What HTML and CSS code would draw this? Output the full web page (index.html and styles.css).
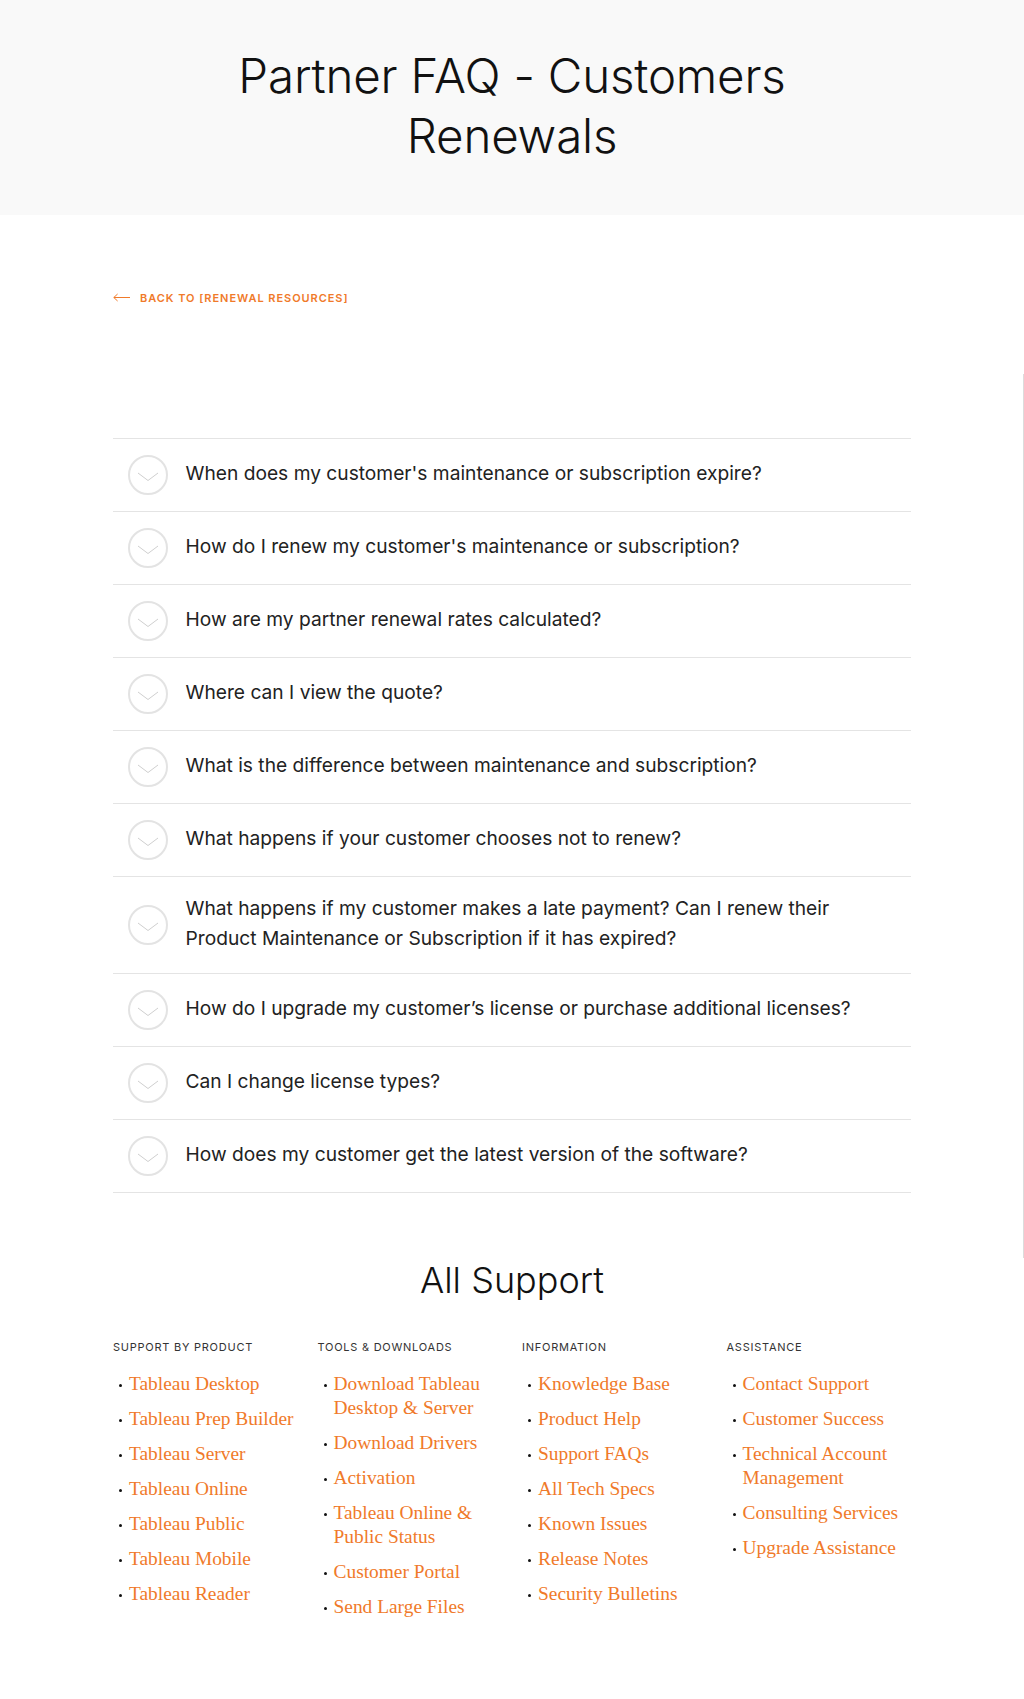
FILE: index.html
```html
<!DOCTYPE html>
<html lang="en">
<head>
<meta charset="utf-8">
<title>Partner FAQ - Customers Renewals</title>
<link rel="stylesheet" href="styles.css">
</head>
<body>
<header class="hero">
  <h1 class="hero-title">Partner FAQ - Customers Renewals</h1>
</header>

<div class="back-wrap">
  <a class="back-link" href="#">
    <svg class="back-arrow" width="17" height="9" viewBox="0 0 17 9" aria-hidden="true">
      <path d="M0.8 4.5 H17 M0.8 4.5 L4.6 1 M0.8 4.5 L4.6 8" fill="none" stroke="#f07a2a" stroke-width="1"/>
    </svg>
    <span>Back to [Renewal Resources]</span>
  </a>
</div>

<section class="faq-section">
  <ul class="faq-list">
    <li class="faq-item"><span class="faq-icon"><svg viewBox="0 0 40 40" width="40" height="40"><circle cx="20" cy="20" r="19" fill="none" stroke="#e3e3e3" stroke-width="2"/><polyline points="10,18 20,25.5 30,18" fill="none" stroke="#cfcfcf" stroke-width="1"/></svg></span><span class="faq-q">When does my customer's maintenance or subscription expire?</span></li>
    <li class="faq-item"><span class="faq-icon"><svg viewBox="0 0 40 40" width="40" height="40"><circle cx="20" cy="20" r="19" fill="none" stroke="#e3e3e3" stroke-width="2"/><polyline points="10,18 20,25.5 30,18" fill="none" stroke="#cfcfcf" stroke-width="1"/></svg></span><span class="faq-q">How do I renew my customer's maintenance or subscription?</span></li>
    <li class="faq-item"><span class="faq-icon"><svg viewBox="0 0 40 40" width="40" height="40"><circle cx="20" cy="20" r="19" fill="none" stroke="#e3e3e3" stroke-width="2"/><polyline points="10,18 20,25.5 30,18" fill="none" stroke="#cfcfcf" stroke-width="1"/></svg></span><span class="faq-q">How are my partner renewal rates calculated?</span></li>
    <li class="faq-item"><span class="faq-icon"><svg viewBox="0 0 40 40" width="40" height="40"><circle cx="20" cy="20" r="19" fill="none" stroke="#e3e3e3" stroke-width="2"/><polyline points="10,18 20,25.5 30,18" fill="none" stroke="#cfcfcf" stroke-width="1"/></svg></span><span class="faq-q">Where can I view the quote?</span></li>
    <li class="faq-item"><span class="faq-icon"><svg viewBox="0 0 40 40" width="40" height="40"><circle cx="20" cy="20" r="19" fill="none" stroke="#e3e3e3" stroke-width="2"/><polyline points="10,18 20,25.5 30,18" fill="none" stroke="#cfcfcf" stroke-width="1"/></svg></span><span class="faq-q">What is the difference between maintenance and subscription?</span></li>
    <li class="faq-item"><span class="faq-icon"><svg viewBox="0 0 40 40" width="40" height="40"><circle cx="20" cy="20" r="19" fill="none" stroke="#e3e3e3" stroke-width="2"/><polyline points="10,18 20,25.5 30,18" fill="none" stroke="#cfcfcf" stroke-width="1"/></svg></span><span class="faq-q">What happens if your customer chooses not to renew?</span></li>
    <li class="faq-item"><span class="faq-icon"><svg viewBox="0 0 40 40" width="40" height="40"><circle cx="20" cy="20" r="19" fill="none" stroke="#e3e3e3" stroke-width="2"/><polyline points="10,18 20,25.5 30,18" fill="none" stroke="#cfcfcf" stroke-width="1"/></svg></span><span class="faq-q">What happens if my customer makes a late payment? Can I renew their Product Maintenance or Subscription if it has expired?</span></li>
    <li class="faq-item"><span class="faq-icon"><svg viewBox="0 0 40 40" width="40" height="40"><circle cx="20" cy="20" r="19" fill="none" stroke="#e3e3e3" stroke-width="2"/><polyline points="10,18 20,25.5 30,18" fill="none" stroke="#cfcfcf" stroke-width="1"/></svg></span><span class="faq-q">How do I upgrade my customer’s license or purchase additional licenses?</span></li>
    <li class="faq-item"><span class="faq-icon"><svg viewBox="0 0 40 40" width="40" height="40"><circle cx="20" cy="20" r="19" fill="none" stroke="#e3e3e3" stroke-width="2"/><polyline points="10,18 20,25.5 30,18" fill="none" stroke="#cfcfcf" stroke-width="1"/></svg></span><span class="faq-q">Can I change license types?</span></li>
    <li class="faq-item"><span class="faq-icon"><svg viewBox="0 0 40 40" width="40" height="40"><circle cx="20" cy="20" r="19" fill="none" stroke="#e3e3e3" stroke-width="2"/><polyline points="10,18 20,25.5 30,18" fill="none" stroke="#cfcfcf" stroke-width="1"/></svg></span><span class="faq-q">How does my customer get the latest version of the software?</span></li>
  </ul>
</section>

<section class="support">
  <h2 class="support-title">All Support</h2>
  <div class="support-grid">
    <div class="support-col">
      <h3 class="col-title">Support by Product</h3>
      <ul class="link-list">
        <li><a href="#">Tableau Desktop</a></li>
        <li><a href="#">Tableau Prep Builder</a></li>
        <li><a href="#">Tableau Server</a></li>
        <li><a href="#">Tableau Online</a></li>
        <li><a href="#">Tableau Public</a></li>
        <li><a href="#">Tableau Mobile</a></li>
        <li><a href="#">Tableau Reader</a></li>
      </ul>
    </div>
    <div class="support-col">
      <h3 class="col-title">Tools &amp; Downloads</h3>
      <ul class="link-list">
        <li><a href="#">Download Tableau Desktop &amp; Server</a></li>
        <li><a href="#">Download Drivers</a></li>
        <li><a href="#">Activation</a></li>
        <li><a href="#">Tableau Online &amp; Public Status</a></li>
        <li><a href="#">Customer Portal</a></li>
        <li><a href="#">Send Large Files</a></li>
      </ul>
    </div>
    <div class="support-col">
      <h3 class="col-title">Information</h3>
      <ul class="link-list">
        <li><a href="#">Knowledge Base</a></li>
        <li><a href="#">Product Help</a></li>
        <li><a href="#">Support FAQs</a></li>
        <li><a href="#">All Tech Specs</a></li>
        <li><a href="#">Known Issues</a></li>
        <li><a href="#">Release Notes</a></li>
        <li><a href="#">Security Bulletins</a></li>
      </ul>
    </div>
    <div class="support-col">
      <h3 class="col-title">Assistance</h3>
      <ul class="link-list">
        <li><a href="#">Contact Support</a></li>
        <li><a href="#">Customer Success</a></li>
        <li><a href="#">Technical Account Management</a></li>
        <li><a href="#">Consulting Services</a></li>
        <li><a href="#">Upgrade Assistance</a></li>
      </ul>
    </div>
  </div>
</section>
</body>
</html>
```

FILE: styles.css
```css
* { box-sizing: border-box; }

html, body {
  margin: 0;
  padding: 0;
  background: #ffffff;
}

body {
  font-family: Inter, "Noto Sans", Arial, sans-serif;
  color: #222;
  min-height: 1699px;
}

.hero {
  background: #f9f9f9;
  padding: 46px 0 49px;
}

.hero-title {
  margin: 0 auto;
  max-width: 620px;
  text-align: center;
  font-family: Inter, Arial, sans-serif;
  font-weight: 300;
  font-size: 47.5px;
  line-height: 60px;
  color: #111;
  letter-spacing: -0.2px;
}

.back-wrap {
  padding: 71px 0 0 113px;
  height: 159px;
}

.back-link {
  display: inline-flex;
  align-items: center;
  gap: 10px;
  text-decoration: none;
  color: #f07a2a;
  font-family: Inter, Arial, sans-serif;
  font-size: 11px;
  line-height: 16px;
  font-weight: 600;
  letter-spacing: 0.95px;
  text-transform: uppercase;
}

.back-arrow { display: block; }

.faq-section {
  border-right: 1px solid #dcdcdc;
  padding: 64px 0 65px;
}

.faq-list {
  list-style: none;
  margin: 0 auto;
  padding: 0;
  width: 798px;
  border-bottom: 1px solid #e4e4e4;
}

.faq-item {
  display: flex;
  align-items: center;
  gap: 18px;
  border-top: 1px solid #e4e4e4;
  padding: 16px 0 16px 15px;
}

.faq-icon {
  flex: 0 0 40px;
  width: 40px;
  height: 40px;
}

.faq-icon svg { display: block; }

.faq-q {
  font-size: 19.2px;
  line-height: 30px;
  padding: 0 24px 4px 0;
  color: #222;
  font-weight: 400;
}

.support {
  padding: 0 0 60px;
}

.support-title {
  margin: 0 0 37px;
  text-align: center;
  font-family: Inter, Arial, sans-serif;
  font-weight: 300;
  font-size: 36px;
  line-height: 44px;
  color: #111;
}

.support-grid {
  width: 798px;
  margin: 0 auto;
  display: grid;
  grid-template-columns: repeat(4, 1fr);
  gap: 20px;
}

.col-title {
  margin: 0 0 17px;
  font-family: Inter, Arial, sans-serif;
  font-size: 11px;
  line-height: 16px;
  font-weight: 400;
  letter-spacing: 0.75px;
  text-transform: uppercase;
  color: #333;
}

.link-list {
  list-style: none;
  margin: 0;
  padding: 0;
}

.link-list li {
  display: flex;
  gap: 7px;
  margin-bottom: 11px;
  font-family: "Liberation Serif", "Times New Roman", serif;
  font-size: 19.4px;
  line-height: 24px;
}

.link-list li::before {
  content: "";
  flex: 0 0 3px;
  width: 3px;
  height: 3px;
  margin: 12px 0 0 6px;
  background: #111;
  border-radius: 50%;
}

.link-list a {
  color: #f07a2a;
  text-decoration: none;
}
```
